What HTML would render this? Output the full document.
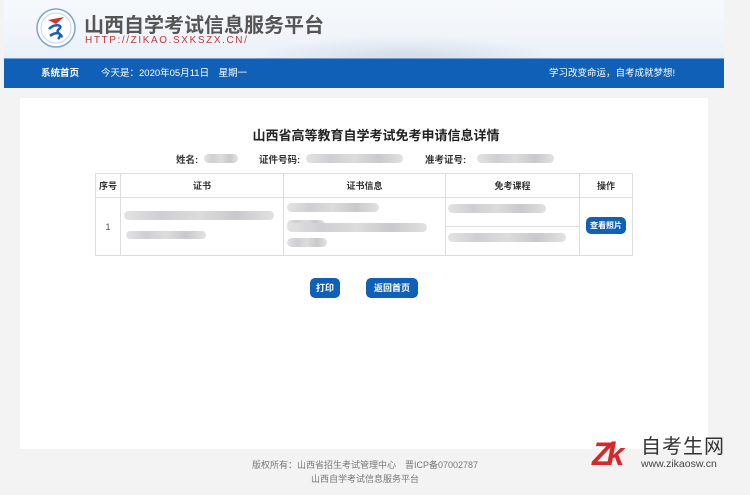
<!DOCTYPE html>
<html><head><meta charset="utf-8"><style>
*{margin:0;padding:0;box-sizing:border-box}
body{width:750px;height:495px;background:#f3f3f3;font-family:"Liberation Sans","Noto Sans CJK SC",sans-serif;position:relative;overflow:hidden;color:#333}
.hd{position:absolute;left:4px;top:0;width:720px;height:58px;background:linear-gradient(180deg,#f6f9fc 0%,#f1f5fa 60%,#e9f0f7 100%)}
.hd .mt{position:absolute;left:250px;top:36px;width:300px;height:22px;background:radial-gradient(ellipse at 50% 100%,#d3dde8 0%,rgba(230,236,243,0) 70%)}
.bar{position:absolute;left:4px;top:58px;width:720px;height:30px;background:#1160b7;border-top:1px solid #6ea0d8;color:#fff;font-size:9.5px;line-height:29px}
.box{position:absolute;left:20px;top:98px;width:688px;height:351px;background:#fff}
.blur{position:absolute;height:9px;border-radius:5px;background:linear-gradient(90deg,#e3e3e3,#cfcfd3,#dcdcdc,#c9c9cc,#e2e2e2)}
table{position:absolute;left:95px;top:173px;border-collapse:collapse;font-size:9px}
td{border:1px solid #ddd;text-align:center;padding:0}
.btn{position:absolute;background:#1160b7;color:#fff;font-size:9px;font-weight:bold;text-align:center;border-radius:5px}
</style></head><body>
<div class="hd"><div class="mt"></div>
<svg style="position:absolute;left:30px;top:7px" width="44" height="42" viewBox="0 0 44 42"><circle cx="22" cy="21" r="19" fill="#fff" stroke="#7aa6d8" stroke-width="1.5"/><circle cx="22" cy="21" r="15" fill="none" stroke="#c5d7ec" stroke-width="1"/><path d="M14 13 L30 10 L22 17 Z" fill="#d9312a"/><path d="M15 22 C20 16 30 18 25 22 C20 26 30 28 27 30 M16 29 C22 24 30 26 24 32" fill="none" stroke="#1a5fb4" stroke-width="2.5"/></svg>
<div style="position:absolute;left:80px;top:9px;font-size:20px;font-weight:bold;color:#555">山西自学考试信息服务平台</div>
<div style="position:absolute;left:81px;top:35px;font-size:10px;color:#c0393b;letter-spacing:1.6px">HTTP://ZIKAO.SXKSZX.CN/</div>
</div>
<div class="bar"><span style="position:absolute;left:37px;font-weight:bold">系统首页</span><span style="position:absolute;left:97px">今天是：2020年05月11日　星期一</span><span style="position:absolute;left:545px">学习改变命运，自考成就梦想!</span></div>
<div class="box"></div>
<div style="position:absolute;left:0;width:750px;top:125px;text-align:center;font-size:13px;font-weight:bold;color:#222;padding-left:2px">山西省高等教育自学考试免考申请信息详情</div>
<div style="position:absolute;left:176px;top:152px;font-size:9.5px;font-weight:bold">姓名:</div>
<div class="blur" style="left:204px;top:154px;width:34px"></div>
<div style="position:absolute;left:259px;top:152px;font-size:9.5px;font-weight:bold">证件号码:</div>
<div class="blur" style="left:306px;top:154px;width:97px"></div>
<div style="position:absolute;left:425px;top:152px;font-size:9.5px;font-weight:bold">准考证号:</div>
<div class="blur" style="left:477px;top:154px;width:77px"></div>
<table>
<tr style="height:24px;font-weight:bold"><td style="width:25px">序号</td><td style="width:163px">证书</td><td style="width:162px">证书信息</td><td style="width:134px">免考课程</td><td style="width:53px">操作</td></tr>
<tr style="height:29px"><td rowspan="2" style="color:#555">1</td><td rowspan="2"></td><td rowspan="2"></td><td></td><td rowspan="2"></td></tr>
<tr style="height:29px"><td></td></tr>
</table>
<div class="blur" style="left:124px;top:211px;width:150px"></div>
<div class="blur" style="left:126px;top:231px;width:80px;height:8px"></div>
<div class="blur" style="left:287px;top:203px;width:92px"></div>
<div class="blur" style="left:287px;top:220px;width:38px"></div>
<div class="blur" style="left:287px;top:223px;width:140px"></div>
<div class="blur" style="left:287px;top:238px;width:40px"></div>
<div class="blur" style="left:448px;top:204px;width:98px"></div>
<div class="blur" style="left:448px;top:233px;width:118px"></div>
<div class="btn" style="left:586px;top:217px;width:40px;height:17px;line-height:17px;font-size:8px">查看照片</div>
<div class="btn" style="left:310px;top:278px;width:30px;height:20px;line-height:20px">打印</div>
<div class="btn" style="left:366px;top:278px;width:52px;height:20px;line-height:20px">返回首页</div>
<div style="position:absolute;left:0;width:730px;top:458px;text-align:center;font-size:9px;color:#777;line-height:14px">版权所有：山西省招生考试管理中心　晋ICP备07002787<br>山西自学考试信息服务平台</div>
<div style="position:absolute;left:592px;top:436px;font-size:32px;font-weight:900;color:#d9262a;font-style:italic;letter-spacing:-5px;line-height:36px">Zk</div>
<div style="position:absolute;left:641px;top:435px;font-size:20px;color:#333;letter-spacing:1px;line-height:24px">自考生网</div>
<div style="position:absolute;left:641px;top:458px;font-size:10.5px;color:#444;line-height:12px">www.zikaosw.cn</div>
</body></html>
